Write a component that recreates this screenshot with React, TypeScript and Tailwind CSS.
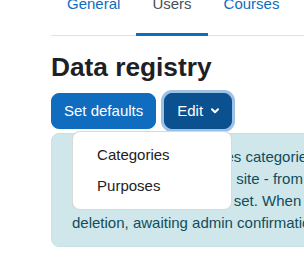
import React from "react";

export default function App() {
  const lines = [
    "The data registry enables categories (types of data) and purposes (the reasons for processing data) to be",
    "set for all content on the site - from users and courses down to activities and blocks. For each purpose, a",
    "retention period may be set. When a retention period has expired, the data is flagged and listed for",
    "deletion, awaiting admin confirmation.",
  ];
  return (
    <div className="w-[304px] h-[261px] overflow-hidden bg-white font-['Liberation_Sans',Arial,sans-serif]">
      <div className="w-[900px] pl-[51px] -mt-[7px]">
        <ul className="flex border-b border-[#dee2e6]">
          <li className="-mb-px">
            <a className="block px-4 pb-[18px] leading-[22px] text-[15px] border-b-[3px] border-transparent text-[#0f6cbf]">
              General
            </a>
          </li>
          <li className="-mb-px">
            <a className="block px-4 pb-[18px] leading-[22px] text-[15px] border-b-[3px] border-[#0f6cbf] text-[#495057]">
              Users
            </a>
          </li>
          <li className="-mb-px">
            <a className="block px-4 pb-[18px] leading-[22px] text-[15px] border-b-[3px] border-transparent text-[#0f6cbf]">
              Courses
            </a>
          </li>
        </ul>

        <h2 className="mt-4 mb-[9px] text-[26.25px] leading-[1.2] font-bold text-[#1d2125]">
          Data registry
        </h2>

        <div className="flex gap-2">
          <button className="px-3 py-[6px] border border-[#0f6cbf] bg-[#0f6cbf] text-white text-[15px] leading-[22.5px] rounded-lg">
            Set defaults
          </button>
          <div className="relative">
            <button className="flex items-center gap-2 px-3 py-[6px] border border-[#0a4f8e] bg-[#0b5190] text-white text-[15px] leading-[22.5px] rounded-lg shadow-[0_0_0_3px_#9dc0e5]">
              <span>Edit</span>
              <svg width="8" height="6" viewBox="0 0 8 6" className="mt-[1px]">
                <path d="M1 1.2 L4 4.2 L7 1.2" fill="none" stroke="white" strokeWidth="2" strokeLinecap="round" strokeLinejoin="round" />
              </svg>
            </button>
            <div className="absolute right-0 top-full mt-[2px] w-[160px] bg-white border border-black/15 rounded-lg py-2 z-10">
              <a className="block px-6 py-1 text-[15px] leading-[22.5px] text-[#1d2125]">Categories</a>
              <a className="block px-6 py-1 text-[15px] leading-[22.5px] text-[#1d2125]">Purposes</a>
            </div>
          </div>
        </div>

        <div className="mt-1 border border-[#c5e2e7] bg-[#cfe7eb] rounded-lg px-5 py-3 text-[15px] leading-[22px] text-[#124d5a]">
          {lines.map((l, i) => (
            <div key={i} className="whitespace-nowrap">
              {l}
            </div>
          ))}
        </div>
      </div>
    </div>
  );
}
